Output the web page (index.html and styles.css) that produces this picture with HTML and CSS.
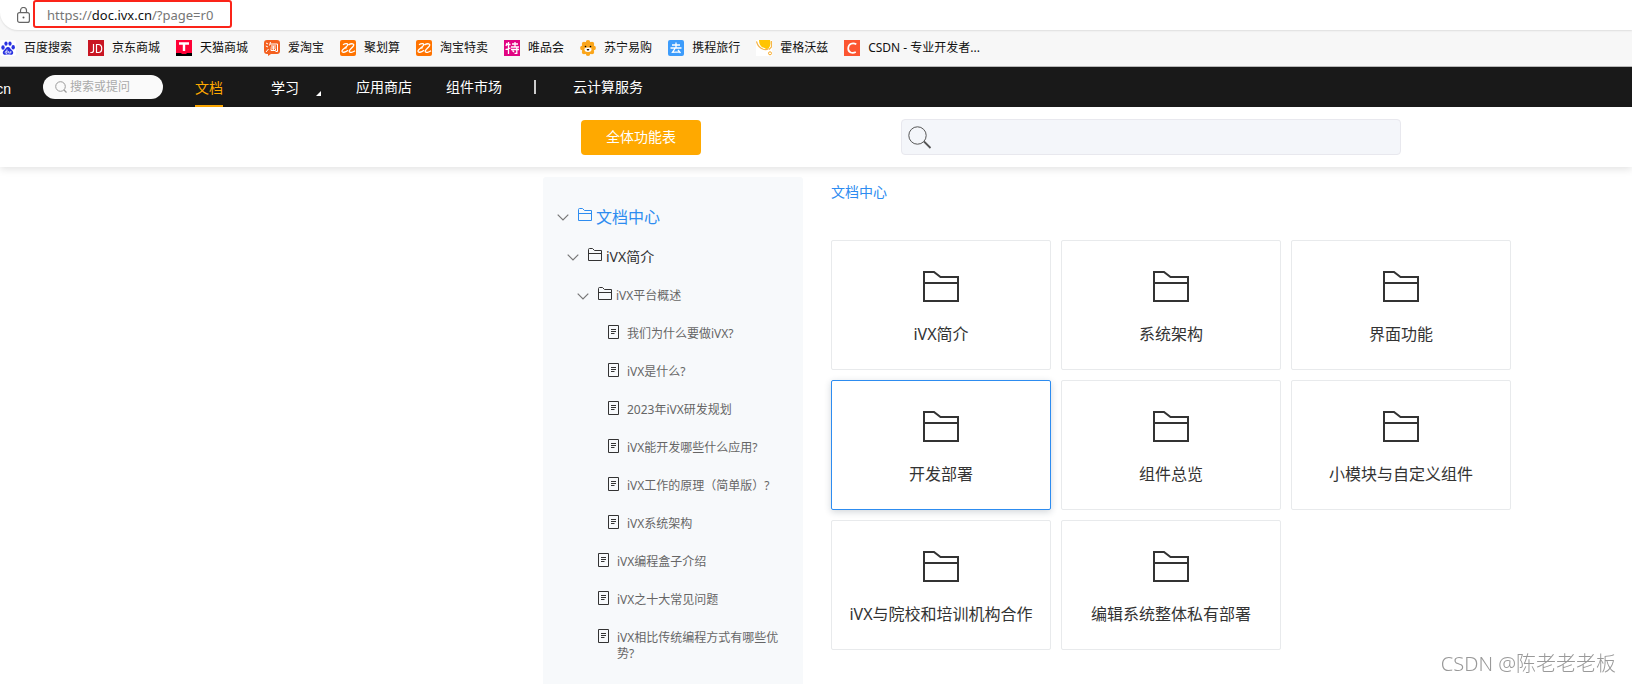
FILE: index.html
```html
<!DOCTYPE html>
<html lang="zh-CN">
<head>
<meta charset="utf-8">
<title>文档中心</title>
<link rel="stylesheet" href="styles.css">
</head>
<body>
<svg class="sprite" aria-hidden="true">
  <symbol id="folder" viewBox="0 0 36 31"><path d="M1 1H11L17.500 6H35V30H1ZM1 12H35" fill="none" stroke="currentColor" stroke-width="2"/></symbol>
  <symbol id="folder-small" viewBox="0 0 14 13"><path d="M.5 12.500V1.500Q.5.500 1.500.5H4.500L6.500 2.500H13.500V12.500ZM.5 5.500H13.500" fill="none" stroke="currentColor"/></symbol>
  <symbol id="page" viewBox="0 0 11 14"><path d="M.5.500H10.500V13.500H.5Z" fill="none" stroke="currentColor"/><path d="M3 4.500H8M3 6.500H8M3 8.500H6.500" fill="none" stroke="currentColor"/></symbol>
  <symbol id="chevron" viewBox="0 0 12 7"><path d="M.7.700 6 6 11.300.7" fill="none" stroke="currentColor" stroke-width="1.200"/></symbol>
  <symbol id="search" viewBox="0 0 24 24"><circle cx="9.500" cy="9.500" r="8.700" fill="none" stroke="currentColor"/><path d="M16 15.500 22.500 22" fill="none" stroke="currentColor" stroke-width="1.800"/></symbol>
  <symbol id="search-small" viewBox="0 0 12 12"><circle cx="5.500" cy="5.500" r="4.800" fill="none" stroke="currentColor"/><path d="M9 9 11.500 11.500" fill="none" stroke="currentColor" stroke-width="1.200"/></symbol>
  <symbol id="alibaba" viewBox="0 0 16 16"><rect width="16" height="16" rx="2" fill="#ff7300"/><path d="M3 4.800C5.500 3 8.800 3.200 7.300 5.600C6 7.500 2.500 9 2 10.800C1.700 13.200 5.500 12.400 8 10.300M4.200 8.400 6.800 7.700M8.500 4.900C11.500 3 15 3.600 13.300 6.100C12 8 9.200 9.500 9.200 11.200C9.400 13.200 13 12.300 15 10.800" fill="none" stroke="#fff" stroke-width="1.300"/></symbol>
</svg>

<header class="browser">
  <div class="address">
    <svg class="lock" viewBox="0 0 13 16" aria-hidden="true"><rect x=".6" y="5.600" width="11.800" height="9.800" rx="2" fill="none" stroke="#666" stroke-width="1.200"/><path d="M3.500 5.500V3.500a3 3 0 0 1 6 0V5.500" fill="none" stroke="#666" stroke-width="1.200"/><circle cx="6.500" cy="10.500" r="1" fill="#555"/></svg>
    <div class="url">https://<span class="host">doc.ivx.cn</span>/?page=r0</div>
  </div>
  <nav class="bookmarks" aria-label="收藏夹">
    <a href="#"><svg viewBox="0 0 16 16"><rect width="16" height="16" rx="2" fill="#fff"/><g fill="#2932e1"><ellipse cx="3" cy="7.500" rx="1.700" ry="2.200"/><ellipse cx="6" cy="3.600" rx="1.600" ry="2.200"/><ellipse cx="10" cy="3.600" rx="1.600" ry="2.200"/><ellipse cx="13.200" cy="7.300" rx="1.700" ry="2.200"/><path d="M8 7C10 7 10.500 9 12 10.300C14 12 13.500 15 11 14.800C9 14.500 7 14.500 5.200 14.800C2.500 15 2 12 4 10.300C5.500 9 6 7 8 7Z"/></g><path d="M7 9.500V13.300H5.800Q4.600 12.300 5.800 11.200H7M8.700 11V13H10.800V11" fill="none" stroke="#fff" stroke-width=".8"/></svg>百度搜索</a>
    <a href="#"><svg viewBox="0 0 16 16"><rect width="16" height="16" fill="#c91623"/><path d="M5.500 4V10.500Q5.500 12.500 3.500 12.500H2.300M8.500 4.500V12.500H10.500C14.800 12.500 14.800 4.500 10.500 4.500Z" fill="none" stroke="#fff" stroke-width="1.200"/></svg>京东商城</a>
    <a href="#"><svg viewBox="0 0 16 16"><rect width="16" height="16" fill="#ff0036"/><path d="M0 13H5L6 14H10L11 13H16V16H0Z" fill="#000"/><path d="M3 3.500H13M8 3.500V11" fill="none" stroke="#fff" stroke-width="2.400"/></svg>天猫商城</a>
    <a href="#"><svg viewBox="0 0 16 16"><path d="M3 0H13Q16 0 16 3V11Q16 14 13 14H7L4 16V14H3Q0 14 0 11V3Q0 0 3 0Z" fill="#f4601f"/><path d="M2 3 4 4M1.800 6 4 7M2 12 4.500 9M6.500 2 5.500 5.500M6 4H13.500V11.500H11.500M7 6H12M6.500 8H12M9.300 6V10.500M7 9V10.500H11.500V9" fill="none" stroke="#fff"/></svg>爱淘宝</a>
    <a href="#"><svg><use href="#alibaba"/></svg>聚划算</a>
    <a href="#"><svg><use href="#alibaba"/></svg>淘宝特卖</a>
    <a href="#"><svg viewBox="0 0 16 16"><rect width="16" height="16" fill="#e10482"/><path d="M3 3 2 6M2.500 4.500H6.500M4.500 2V14M1.500 9.500 6.500 8M8 4H14M11 2V7M7 7H15M7 9.500H15M12.800 7V13.300H10.500M8.500 10.500 10 12" fill="none" stroke="#fff" stroke-width="1.300"/></svg>唯品会</a>
    <a href="#"><svg viewBox="0 0 16 16"><g fill="#faa51a"><circle cx="8" cy="8" r="6.500"/><circle cx="8" cy="2.300" r="2.200"/><circle cx="8" cy="13.700" r="2.200"/><circle cx="2.300" cy="8" r="2.200"/><circle cx="13.700" cy="8" r="2.200"/><circle cx="4" cy="4" r="2.200"/><circle cx="12" cy="4" r="2.200"/><circle cx="4" cy="12" r="2.200"/><circle cx="12" cy="12" r="2.200"/></g><path d="M4.500 8.500Q8 6.500 11.500 8.500Q12 12 8 12Q4 12 4.500 8.500Z" fill="#fff"/><circle cx="5.500" cy="6.500" r=".8"/><circle cx="10.500" cy="6.500" r=".8"/><path d="M6.500 9H9.500L8 11Z"/></svg>苏宁易购</a>
    <a href="#"><svg viewBox="0 0 16 16"><rect width="16" height="16" rx="2" fill="#3d9cfb"/><path d="M4 5H12M8 2.500V8M2.500 8H13.500M7 8.500 4.500 12.300 11.500 11.800M10 9.800 12.500 13" fill="none" stroke="#fff" stroke-width="1.300"/></svg>携程旅行</a>
    <a href="#"><svg viewBox="0 0 16 16"><rect width="16" height="16" fill="#fff"/><path d="M3 0H14Q15.500 5 12.500 8.500Q10 9.500 8.500 8Q3 7 3 0Z" fill="#ffc400"/><path d="M.5 1.500Q2 8 8 9.500 11 10 12.500 8.500M15.500 1V7L13 9.500" fill="none" stroke="#f5b54a" stroke-width="1.200"/><circle cx="14" cy="13.300" r="1.500" fill="none" stroke="#f7a928"/></svg>霍格沃兹</a>
    <a href="#"><svg viewBox="0 0 16 16"><rect width="16" height="16" fill="#fc5531"/><path d="M12.300 4.300C9 2.500 4.500 3.500 4.200 8.300C4 12.800 8.500 13.600 11.800 12" fill="none" stroke="#fff" stroke-width="1.700"/></svg>CSDN - 专业开发者...</a>
  </nav>
</header>

<nav class="site-nav" aria-label="主导航">
  <a class="brand" href="#">cn</a>
  <label class="ask"><svg aria-hidden="true"><use href="#search-small"/></svg><input type="text" placeholder="搜索或提问" aria-label="搜索或提问"></label>
  <a class="nav-docs active" href="#">文档</a>
  <a class="nav-learn" href="#">学习<svg class="caret" viewBox="0 0 5 5" aria-hidden="true"><path d="M5 0V5H0Z" fill="#fff"/></svg></a>
  <a class="nav-store" href="#">应用商店</a>
  <a class="nav-market" href="#">组件市场</a>
  <span class="divider"></span>
  <a class="nav-cloud" href="#">云计算服务</a>
</nav>

<div class="toolbar columns">
  <div class="tools">
    <button class="all-features" type="button">全体功能表</button>
    <label class="doc-search"><svg aria-hidden="true"><use href="#search"/></svg><input type="text" aria-label="搜索文档"></label>
  </div>
</div>

<div class="page columns">
  <div class="layout">
    <aside class="sidebar">
      <ul class="tree">
        <li><a class="row root" href="#"><svg class="chevron"><use href="#chevron"/></svg><svg class="folder"><use href="#folder-small"/></svg><span>文档中心</span></a>
          <ul>
            <li><a class="row chapter" href="#"><svg class="chevron"><use href="#chevron"/></svg><svg class="folder"><use href="#folder-small"/></svg><span>iVX简介</span></a>
              <ul>
                <li><a class="row" href="#"><svg class="chevron"><use href="#chevron"/></svg><svg class="folder"><use href="#folder-small"/></svg><span>iVX平台概述</span></a>
                  <ul>
                    <li><a class="row leaf" href="#"><svg class="doc"><use href="#page"/></svg><span>我们为什么要做iVX?</span></a></li>
                    <li><a class="row leaf" href="#"><svg class="doc"><use href="#page"/></svg><span>iVX是什么?</span></a></li>
                    <li><a class="row leaf" href="#"><svg class="doc"><use href="#page"/></svg><span>2023年iVX研发规划</span></a></li>
                    <li><a class="row leaf" href="#"><svg class="doc"><use href="#page"/></svg><span>iVX能开发哪些什么应用?</span></a></li>
                    <li><a class="row leaf" href="#"><svg class="doc"><use href="#page"/></svg><span>iVX工作的原理（简单版）?</span></a></li>
                    <li><a class="row leaf" href="#"><svg class="doc"><use href="#page"/></svg><span>iVX系统架构</span></a></li>
                  </ul>
                </li>
                <li><a class="row leaf" href="#"><svg class="doc"><use href="#page"/></svg><span>iVX编程盒子介绍</span></a></li>
                <li><a class="row leaf" href="#"><svg class="doc"><use href="#page"/></svg><span>iVX之十大常见问题</span></a></li>
                <li><a class="row leaf" href="#"><svg class="doc"><use href="#page"/></svg><span>iVX相比传统编程方式有哪些优势?</span></a></li>
              </ul>
            </li>
          </ul>
        </li>
      </ul>
    </aside>
    <main class="content">
      <a class="crumb" href="#">文档中心</a>
      <div class="cards">
        <a class="card" href="#"><svg><use href="#folder"/></svg>iVX简介</a>
        <a class="card" href="#"><svg><use href="#folder"/></svg>系统架构</a>
        <a class="card" href="#"><svg><use href="#folder"/></svg>界面功能</a>
        <a class="card selected" href="#"><svg><use href="#folder"/></svg>开发部署</a>
        <a class="card" href="#"><svg><use href="#folder"/></svg>组件总览</a>
        <a class="card" href="#"><svg><use href="#folder"/></svg>小模块与自定义组件</a>
        <a class="card" href="#"><svg><use href="#folder"/></svg>iVX与院校和培训机构合作</a>
        <a class="card" href="#"><svg><use href="#folder"/></svg>编辑系统整体私有部署</a>
      </div>
    </main>
  </div>
</div>
<div class="watermark">CSDN @陈老老老板</div>
</body>
</html>
```
FILE: styles.css
```css
* { box-sizing: border-box; }
body {
  margin: 0;
  min-height: 100vh;
  display: flex;
  flex-direction: column;
  background: #fff;
  color: #333;
  font: 14px/20px "Noto Sans", "Noto Sans CJK SC", sans-serif;
}
a { color: inherit; text-decoration: none; }
svg { display: block; flex: none; }
ul { list-style: none; margin: 0; padding: 0; }
input { font: inherit; border: 0; outline: 0; background: none; padding: 0; min-width: 0; }
.sprite { position: absolute; width: 0; height: 0; }

/* Browser chrome */
.browser { background: #f7f7f7; border-bottom: 1px solid #b9b9b9; }
.address {
  display: flex;
  height: 30px;
  padding-left: 17px;
  background: #fff;
  border-bottom-left-radius: 18px;
  box-shadow: 0 1px 2px #0000001a;
}
.lock { width: 13px; height: 16px; margin-top: 7px; }
.url {
  width: 199px;
  height: 28px;
  margin-left: 3px;
  padding-left: 12px;
  border: 2px solid #fb2419;
  border-radius: 3px;
  color: #767676;
  font-size: 13px;
  line-height: 26px;
  white-space: nowrap;
}
.host { color: #111; }
.bookmarks { display: flex; gap: 16px; height: 36px; align-items: center; overflow: hidden; }
.bookmarks a { display: flex; gap: 8px; color: #111; font-size: 12px; white-space: nowrap; }
.bookmarks svg { width: 16px; height: 16px; align-self: center; }

/* Site navigation */
.site-nav { display: flex; align-items: center; height: 40px; background: #191919; color: #fff; line-height: 42px; white-space: nowrap; }
.brand {
  display: flex;
  justify-content: flex-end;
  width: 11px;
  margin-right: 32px;
  padding-top: 4px;
  font-family: "Liberation Sans", sans-serif;
}
.ask {
  display: flex;
  align-items: center;
  align-self: flex-start;
  gap: 3px;
  width: 120px;
  height: 24px;
  padding: 0 12px;
  margin: 8px 32px 0 0;
  border-radius: 12px;
  background: #fafafa;
  color: #999;
  font-size: 12px;
  line-height: 20px;
}
.ask svg { width: 12px; height: 12px; }
.ask input { flex: 1; }
.ask input::placeholder { color: #aaa; }
.nav-docs, .nav-learn { height: 40px; line-height: 41px; }
.active { color: #ffa900; border-bottom: 2px solid #ffa900; }
.nav-learn { display: flex; margin-left: 48px; }
.caret { width: 5px; height: 5px; margin: 24px 0 0 17px; }
.nav-store { margin-left: 35px; }
.nav-market { margin-left: 34px; }
.divider { width: 2px; height: 14px; margin-left: 32px; background: #ccc; }
.nav-cloud { margin-left: 37px; }

/* Shared column frame */
.columns { display: grid; grid-template-columns: 543fr minmax(0, 968px) 121fr; }
.tools, .layout { grid-column: 2; display: flex; }

/* Toolbar */
.toolbar { height: 60px; box-shadow: 0 2px 8px #0000001f; }
.tools { align-items: center; gap: 200px; padding: 0 110px 0 38px; }
.all-features {
  flex: 0 0 120px;
  height: 35px;
  border: 0;
  border-radius: 4px;
  background: #ffa900;
  color: #fff;
  font: inherit;
}
.doc-search {
  flex: 1;
  display: flex;
  height: 36px;
  padding: 6px;
  gap: 8px;
  border: 1px solid #e8e8ee;
  border-radius: 4px;
  background: #f4f6fa;
  margin-bottom: 1px;
}
.doc-search svg { width: 24px; height: 24px; color: #555; }
.doc-search input { flex: 1; }

/* Documentation page */
.page { flex: 1; padding-top: 10px; }
.layout { gap: 28px; }
.sidebar { flex: 0 0 260px; padding: 20px 20px 8px 14px; background: #f7f9fb; border-radius: 3px 3px 0 0; }
.tree ul { padding-left: 10px; }
.row { display: flex; padding: 11px 0; color: #666; font-size: 12px; line-height: 16px; }
.root { padding: 12px 0; color: #2d8cf0; font-size: 16px; }
.chapter { padding: 12px 0; color: #333; font-size: 14px; }
.chevron { width: 12px; height: 7px; margin: 5px 9px 0 0; color: #777; }
.folder { width: 14px; height: 13px; margin-right: 4px; color: #333; }
.root .folder { color: inherit; }
.row .folder, .row .doc { margin-top: -1px; }
.doc { width: 11px; height: 14px; margin-right: 8px; color: #333; }
.leaf { padding-left: 21px; }

.content { flex: 1; min-width: 0; }
.crumb { display: block; margin: 5px 0 38px; color: #2d8cf0; }
.cards { display: grid; grid-template-columns: repeat(3, minmax(0, 1fr)); gap: 10px; }
.card {
  display: flex;
  flex-direction: column;
  align-items: center;
  gap: 22px;
  height: 130px;
  padding-top: 30px;
  border: 1px solid #e8eaec;
  border-radius: 2px;
  background: #fff;
  font-size: 16px;
}
.card svg { width: 36px; height: 31px; color: #333; }
.selected { border-color: #2d8cf0; box-shadow: 0 2px 7px #1e324633; }

.watermark {
  position: fixed;
  right: 16px;
  bottom: 6px;
  color: #999;
  font: 300 20px/28px "Noto Sans", "Noto Sans CJK SC", sans-serif;
}
```
